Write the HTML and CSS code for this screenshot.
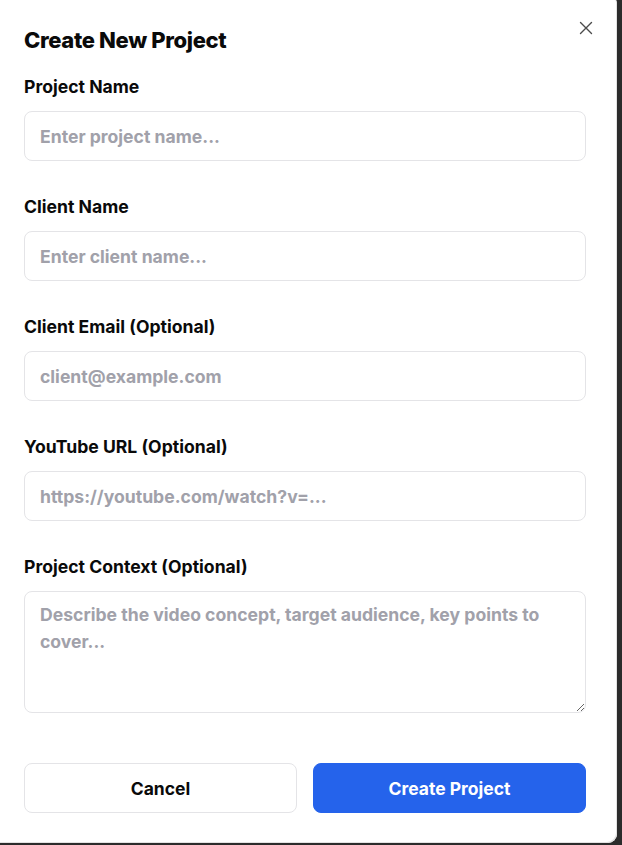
FILE: index.html
```html
<!DOCTYPE html>
<html lang="en">
<head>
<meta charset="utf-8">
<title>Create New Project</title>
<link rel="stylesheet" href="styles.css">
</head>
<body>
<div class="modal">
  <button class="close" aria-label="Close">
    <svg width="14" height="14" viewBox="0 0 14 14" fill="none" stroke="#4b4b4b" stroke-width="1.4" stroke-linecap="round"><path d="M1.5 1.5L12.5 12.5M12.5 1.5L1.5 12.5"/></svg>
  </button>
  <h1 class="title">Create New Project</h1>
  <form class="form">
    <div class="field">
      <label class="label">Project Name</label>
      <input class="input" placeholder="Enter project name...">
    </div>
    <div class="field">
      <label class="label">Client Name</label>
      <input class="input" placeholder="Enter client name...">
    </div>
    <div class="field">
      <label class="label">Client Email (Optional)</label>
      <input class="input" placeholder="client@example.com">
    </div>
    <div class="field">
      <label class="label">YouTube URL (Optional)</label>
      <input class="input" placeholder="https://youtube.com/watch?v=...">
    </div>
    <div class="field">
      <label class="label">Project Context (Optional)</label>
      <textarea class="input textarea" placeholder="Describe the video concept, target audience, key points to cover..."></textarea>
    </div>
    <div class="actions">
      <button type="button" class="btn btn-cancel">Cancel</button>
      <button type="button" class="btn btn-primary">Create Project</button>
    </div>
  </form>
</div>
</body>
</html>
```
FILE: styles.css
```css
* { box-sizing: border-box; }
html, body { margin: 0; padding: 0; }
body {
  background: #2b2b2b;
  font-family: Inter, "Noto Sans", sans-serif;
  overflow: hidden;
  height: 845px;
}
.modal {
  position: relative;
  width: 617px;
  height: 848px;
  margin-top: -5px;
  background: #fff;
  border-radius: 0 9px 9px 0;
  padding: 29px 31px 0 24px;
  box-shadow: inset -1px -1px 0 #e2e2e2;
}
.close {
  position: absolute;
  top: 26px;
  right: 24px;
  border: 0;
  background: none;
  padding: 0;
  width: 14px;
  height: 14px;
  cursor: pointer;
}
.close svg { display: block; }
.title {
  margin: 0 0 19px;
  font-size: 22px;
  line-height: 32px;
  font-weight: 800;
  letter-spacing: -0.35px;
  color: #0a0a0a;
}
.form {
  display: flex;
  flex-direction: column;
  gap: 34px;
}
.field {
  display: flex;
  flex-direction: column;
  gap: 12px;
}
.label {
  font-size: 17.6px;
  line-height: 24px;
  font-weight: 650;
  color: #0a0a0a;
}
.input {
  width: 100%;
  height: 50px;
  border: 1px solid #e4e4e7;
  border-radius: 8px;
  padding: 0 15px;
  font-family: inherit;
  font-size: 17.6px;
  font-weight: 650;
  color: #0a0a0a;
  background: #fff;
  outline: none;
}
.input::placeholder { color: #a1a1aa; }
.textarea {
  height: 122px;
  padding: 9px 15px;
  line-height: 27px;
  resize: vertical;
  display: block;
}
.actions {
  display: flex;
  gap: 16px;
  margin-top: 16px;
}
.btn {
  flex: 1;
  height: 50px;
  border-radius: 8px;
  font-family: inherit;
  font-size: 17.5px;
  font-weight: 700;
  cursor: pointer;
}
.btn-cancel {
  background: #fff;
  border: 1px solid #e4e4e7;
  color: #0a0a0a;
}
.btn-primary {
  background: #2563eb;
  border: 1px solid #2563eb;
  color: #fff;
}
```
